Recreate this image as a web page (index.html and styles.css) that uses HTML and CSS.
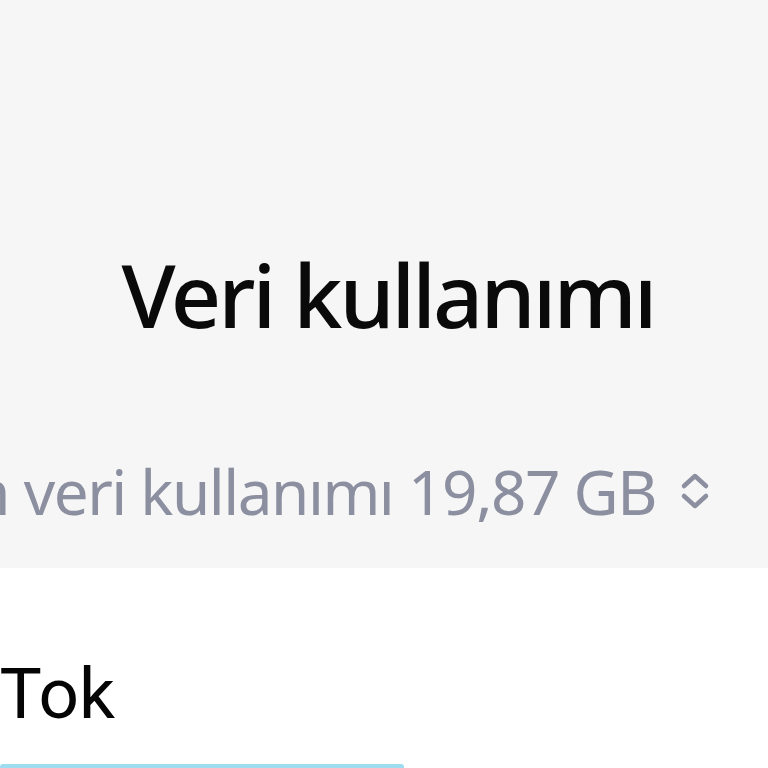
FILE: index.html
```html
<!DOCTYPE html>
<html lang="tr">
<head>
<meta charset="utf-8">
<link rel="stylesheet" href="styles.css">
</head>
<body>
<div class="screen">
  <header class="head">
    <h1 class="title">Veri kullanımı</h1>
    <div class="usage">
      <span class="usage-text">Toplam veri kullanımı 19,87 GB</span>
      <svg class="chev" viewBox="0 0 34 40" width="34" height="40">
        <path d="M6 15 L17 5 L28 15 M6 25 L17 35 L28 25" fill="none" stroke="#8c8fa0" stroke-width="4.5" stroke-linecap="round" stroke-linejoin="round"/>
      </svg>
    </div>
  </header>
  <section class="list">
    <div class="app">
      <div class="app-name">TikTok</div>
      <div class="bar"></div>
    </div>
  </section>
</div>
</body>
</html>
```

FILE: styles.css
```css
html, body {
  margin: 0;
  padding: 0;
  background: #ffffff;
}
.screen {
  width: 768px;
  height: 768px;
  overflow: hidden;
  display: flex;
  flex-direction: column;
}
.head {
  background: #f6f6f7;
  height: 568px;
  box-sizing: border-box;
  padding-top: 250px;
  display: flex;
  flex-direction: column;
  flex-shrink: 0;
}
.title {
  margin: 0;
  font-family: "Noto Sans", sans-serif;
  font-weight: 500;
  font-size: 88px;
  line-height: 88px;
  letter-spacing: -3px;
  color: #0a0a0a;
  text-align: center;
  padding-left: 8px;
}
.usage {
  margin-top: 122px;
  display: flex;
  justify-content: flex-end;
  align-items: center;
  gap: 22px;
  padding-right: 56px;
  overflow: hidden;
  white-space: nowrap;
}
.usage-text {
  font-family: "Noto Sans", sans-serif;
  font-size: 62px;
  line-height: 62px;
  letter-spacing: -1.5px;
  color: #8c8fa0;
  flex-shrink: 0;
}
.chev {
  flex-shrink: 0;
}
.list {
  flex: 1;
  background: #ffffff;
  padding-top: 91px;
  overflow: hidden;
}
.app {
  display: flex;
  flex-direction: column;
}
.app-name {
  font-family: Roboto, sans-serif;
  font-size: 71px;
  line-height: 70px;
  color: #050505;
  margin-left: -96px;
  white-space: nowrap;
}
.bar {
  margin-top: 35px;
  width: 404px;
  height: 6px;
  border-radius: 3px;
  background: #9edcf0;
}
```
